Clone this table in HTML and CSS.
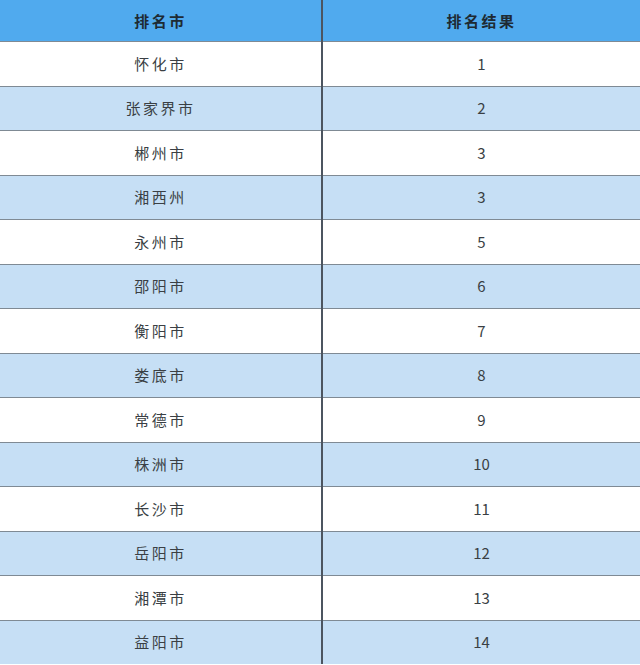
FILE: index.html
```html
<!DOCTYPE html>
<html lang="zh">
<head>
<meta charset="utf-8">
<link rel="stylesheet" href="styles.css">
</head>
<body>
<table class="rank">
  <colgroup><col class="c1"><col class="c2"></colgroup>
  <thead>
    <tr><th>排名市</th><th>排名结果</th></tr>
  </thead>
  <tbody>
    <tr><td>怀化市</td><td>1</td></tr>
    <tr><td>张家界市</td><td>2</td></tr>
    <tr><td>郴州市</td><td>3</td></tr>
    <tr><td>湘西州</td><td>3</td></tr>
    <tr><td>永州市</td><td>5</td></tr>
    <tr><td>邵阳市</td><td>6</td></tr>
    <tr><td>衡阳市</td><td>7</td></tr>
    <tr><td>娄底市</td><td>8</td></tr>
    <tr><td>常德市</td><td>9</td></tr>
    <tr><td>株洲市</td><td>10</td></tr>
    <tr><td>长沙市</td><td>11</td></tr>
    <tr><td>岳阳市</td><td>12</td></tr>
    <tr><td>湘潭市</td><td>13</td></tr>
    <tr><td>益阳市</td><td>14</td></tr>
  </tbody>
</table>
</body>
</html>
```
FILE: styles.css
```css
html, body {
  margin: 0;
  padding: 0;
  background: #ffffff;
}
body {
  font-family: "Noto Sans CJK SC", "Noto Sans", sans-serif;
  color: #333333;
  overflow: hidden;
}
.rank {
  width: 640px;
  border-collapse: collapse;
  table-layout: fixed;
}
.rank .c1 { width: 322px; }
.rank .c2 { width: 318px; }
.rank th,
.rank td {
  text-align: center;
  padding: 0 0 1px;
  font-size: 15px;
  letter-spacing: 2.5px;
  border-bottom: 1px solid #7f8a94;
}
.rank th {
  height: 40px;
  background: #50aaee;
  color: #1e2a33;
  font-weight: 700;
}
.rank td {
  height: 42.5px;
  color: #3a3f44;
}
.rank tbody tr:last-child td {
  border-bottom: 0;
}
.rank th:first-child,
.rank td:first-child {
  border-right: 2px solid #4c5560;
}
.rank td:last-child {
  letter-spacing: 0;
}
.rank tbody tr:nth-child(even) td {
  background: #c6dff5;
}
```
